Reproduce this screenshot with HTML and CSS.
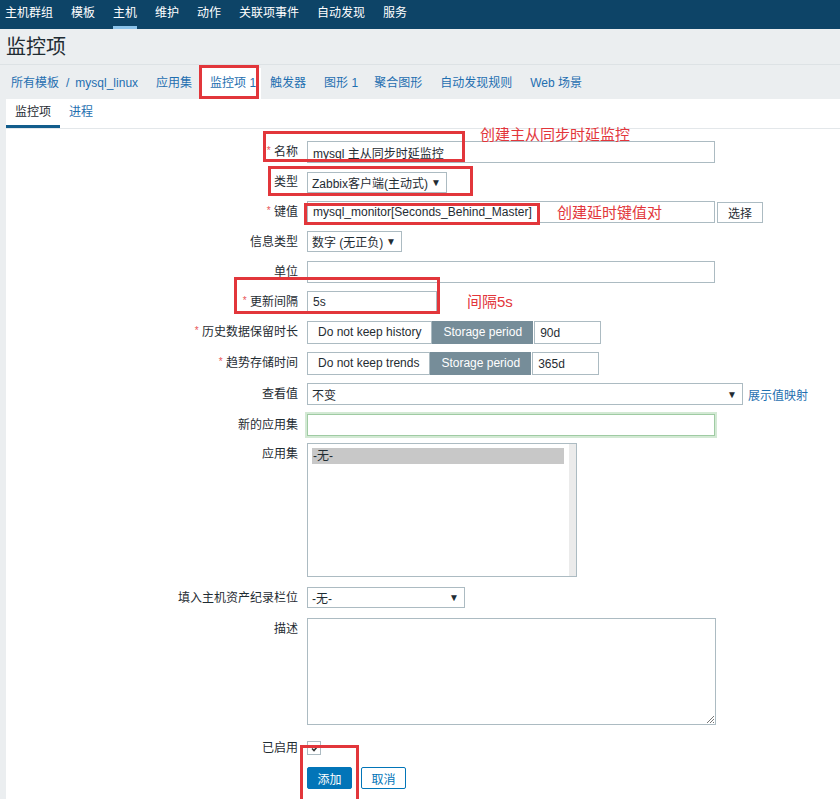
FILE: index.html
```html
<!DOCTYPE html>
<html lang="zh-CN">
<head>
<meta charset="utf-8">
<title>监控项</title>
<link rel="stylesheet" href="styles.css">
</head>
<body>
<nav class="topnav">
  <a>主机群组</a><a>模板</a><a class="active">主机</a><a>维护</a><a>动作</a><a>关联项事件</a><a>自动发现</a><a>服务</a>
</nav>
<header class="page-title"><h1>监控项</h1></header>
<div class="breadcrumbs">
  <a class="crumb">所有模板</a><span class="sep">/</span><a class="crumb-host">mysql_linux</a>
  <a>应用集</a><a class="active">监控项 1</a><a>触发器</a><a class="narrow">图形 1</a><a>聚合图形</a><a>自动发现规则</a><a>Web 场景</a>
</div>
<main class="content">
  <div class="tabs"><a class="active">监控项</a><a>进程</a></div>
  <div class="form">
    <div class="row"><label><span class="req">*</span> 名称</label><div class="ctl"><input class="input w-wide" value="mysql 主从同步时延监控"></div></div>
    <div class="row"><label>类型</label><div class="ctl"><div class="select w-type"><span>Zabbix客户端(主动式)</span><span class="arrow">▼</span></div></div></div>
    <div class="row"><label><span class="req">*</span> 键值</label><div class="ctl"><input class="input w-wide" value="mysql_monitor[Seconds_Behind_Master]"><button class="btn-grey">选择</button></div></div>
    <div class="row"><label>信息类型</label><div class="ctl"><div class="select w-info"><span>数字 (无正负)</span><span class="arrow">▼</span></div></div></div>
    <div class="row"><label>单位</label><div class="ctl"><input class="input w-wide" value=""></div></div>
    <div class="row"><label><span class="req">*</span> 更新间隔</label><div class="ctl"><input class="input w-short" value="5s"></div></div>
    <div class="row row-seg"><label><span class="req">*</span> 历史数据保留时长</label><div class="ctl"><div class="seg"><span>Do not keep history</span><span class="on">Storage period</span></div><input class="input w-days" value="90d"></div></div>
    <div class="row row-seg"><label><span class="req">*</span> 趋势存储时间</label><div class="ctl"><div class="seg"><span>Do not keep trends</span><span class="on">Storage period</span></div><input class="input w-days" value="365d"></div></div>
    <div class="row"><label>查看值</label><div class="ctl"><div class="select w-view"><span>不变</span><span class="arrow">▼</span></div><a class="link">展示值映射</a></div></div>
    <div class="row row-green"><label>新的应用集</label><div class="ctl"><input class="input w-wide focus" value=""></div></div>
    <div class="row row-list"><label>应用集</label><div class="ctl"><div class="listbox"><div class="options"><div class="opt sel">-无-</div></div><div class="scroll"></div></div></div></div>
    <div class="row row-inv"><label>填入主机资产纪录栏位</label><div class="ctl"><div class="select w-inv"><span>-无-</span><span class="arrow">▼</span></div></div></div>
    <div class="row row-desc"><label>描述</label><div class="ctl"><div class="textarea"><svg class="grip" width="10" height="10" viewBox="0 0 10 10"><path d="M9 2L2 9M9 5L5 9M9 8L8 9" stroke="#777" stroke-width="1"/></svg></div></div></div>
    <div class="row row-check"><label>已启用</label><div class="ctl"><span class="checkbox"><svg width="11" height="11" viewBox="0 0 11 11"><path d="M3 5.5L5 7.5L8 4" stroke="#333" stroke-width="1.6" fill="none"/></svg></span></div></div>
    <div class="row row-btns"><label></label><div class="ctl"><button class="btn-main">添加</button><button class="btn-alt">取消</button></div></div>
  </div>
</main>

<div class="mark m1"></div>
<div class="mark m2"></div>
<div class="mark m3"></div>
<div class="mark m4"></div>
<div class="mark m5"></div>
<div class="mark m6"></div>
<div class="note n1">创建主从同步时延监控</div>
<div class="note n2">创建延时键值对</div>
<div class="note n3">间隔5s</div>
</body>
</html>
```

FILE: styles.css
```css
* { box-sizing: border-box; }
body {
  margin: 0;
  background: #ebeef0;
  font-family: "Liberation Sans", "Noto Sans CJK SC", sans-serif;
  font-size: 12px;
  color: #1f2c33;
  position: relative;
  min-height: 799px;
  overflow: hidden;
}
a { text-decoration: none; }

.topnav {
  background: #0d4467;
  height: 29px;
  display: flex;
  gap: 18px;
  padding-left: 5px;
}
.topnav a {
  color: #fff;
  line-height: 26px;
  border-bottom: 3px solid transparent;
}
.topnav a.active { border-bottom-color: #8bc3ea; }

.page-title { height: 35px; padding-left: 6px; }
.page-title h1 {
  margin: 0;
  font-size: 20px;
  font-weight: normal;
  line-height: 36px;
  color: #1f2c33;
}

.breadcrumbs {
  border-top: 1px solid #dde2e5;
  height: 35px;
  display: flex;
  align-items: flex-end;
  padding-left: 2px;
}
.breadcrumbs a {
  color: #1f6fb0;
  line-height: 31px;
  padding: 0 9px;
}
.breadcrumbs a.crumb { padding-right: 0; }
.breadcrumbs .sep { color: #1f6fb0; line-height: 31px; margin: 0 6px 0 7px; }
.breadcrumbs a.crumb-host { padding-left: 0; }
.breadcrumbs a.active { background: #fff; color: #1f6fb0; padding-right: 5px; }
.breadcrumbs a.narrow { padding-right: 7px; }

.content {
  background: #fff;
  margin-left: 6px;
  min-height: 700px;
}
.tabs {
  display: flex;
  height: 30px;
  border-bottom: 1px solid #e3e7ea;
}
.tabs a {
  color: #1f6fb0;
  padding: 0 9px;
  line-height: 26px;
  border-bottom: 3px solid transparent;
}
.tabs a.active { color: #1f2c33; border-bottom-color: #125d8c; }

.form {
  padding-top: 12px;
  display: flex;
  flex-direction: column;
  gap: 8px;
}
.row {
  display: grid;
  grid-template-columns: 292px 1fr;
  column-gap: 9px;
  align-items: start;
}
.row > label {
  text-align: right;
  line-height: 22px;
  height: 22px;
  color: #1f2c33;
}
.req { color: #e8555a; font-size: 10px; line-height: 1; vertical-align: 2px; }
.ctl { display: flex; align-items: center; gap: 3px; }

.input {
  height: 22px;
  border: 1px solid #acbbc2;
  padding: 0 5px;
  font: inherit;
  color: #1f2c33;
  background: #fff;
  outline: none;
}
.w-wide { width: 408px; }
.w-short { width: 130px; }
.w-days { width: 67px; margin-left: -1px; }

.btn-grey {
  height: 21px;
  width: 46px;
  border: 1px solid #acbbc2;
  background: #fff;
  font: inherit;
  color: #1f2c33;
  padding: 0;
  margin-left: -1px;
}

.select {
  height: 21px;
  border: 1px solid #acbbc2;
  display: flex;
  align-items: center;
  justify-content: space-between;
  padding: 0 5px 0 4px;
  background: #fff;
}
.arrow { font-size: 10px; color: #1f2c33; }
.w-type { width: 140px; margin-top: 1px; }
.w-info { width: 95px; }
.w-view { width: 436px; height: 22px; }
.w-inv { width: 158px; }
.link { color: #1f6fb0; margin-left: 2px; }

.row-seg .ctl { gap: 2px; }
.seg { display: flex; height: 23px; }
.seg span {
  border: 1px solid #acbbc2;
  padding: 0 10px;
  line-height: 21px;
  background: #fff;
}
.seg span.on {
  background: #768d99;
  border-color: #768d99;
  color: #fff;
}
.row-seg .input { height: 23px; }

.row-green { margin-top: 1px; }
.focus {
  height: 22px;
  border: 1px solid #9fcba3;
  box-shadow: 0 0 0 2px #d3e9d4;
}

.row-list { margin-top: -1px; }
.listbox {
  width: 270px;
  height: 134px;
  border: 1px solid #acbbc2;
  display: flex;
  justify-content: space-between;
  background: #fff;
}
.options { padding: 4px 4px; flex: 1; }
.opt { line-height: 16px; padding-left: 1px; }
.opt.sel { background: #c8c8c8; width: 252px; }
.scroll { width: 7px; background: #ebebeb; }

.row-inv { margin-top: 2px; }
.row-desc { margin-top: 1px; }
.textarea {
  width: 409px;
  height: 107px;
  border: 1px solid #acbbc2;
  display: flex;
  align-items: flex-end;
  justify-content: flex-end;
}
.grip { display: block; }

.row-check { margin-top: 4px; }
.row-check .ctl { height: 22px; }
.checkbox {
  width: 14px;
  height: 14px;
  border: 1px solid #acbbc2;
  display: flex;
  align-items: center;
  justify-content: center;
  background: #fff;
}

.row-btns { margin-top: 0; }
.row-btns .ctl { gap: 9px; }
.btn-main, .btn-alt {
  height: 22px;
  width: 45px;
  font: inherit;
  border-radius: 2px;
  padding: 0;
}
.btn-main { background: #0275b8; border: 1px solid #0275b8; color: #fff; }
.btn-alt { background: #fff; border: 1px solid #0275b8; color: #0275b8; }

.mark {
  position: absolute;
  border: 3px solid #e2363b;
}
.m1 { left: 263px; top: 131px; width: 202px; height: 31px; }
.m2 { left: 268px; top: 166px; width: 205px; height: 30px; }
.m3 { left: 304px; top: 203px; width: 236px; height: 22px; }
.m4 { left: 234px; top: 277px; width: 206px; height: 37px; }
.m5 { left: 199px; top: 65px; width: 60px; height: 34px; }
.m6 { left: 300px; top: 745px; width: 59px; height: 60px; }

.note {
  position: absolute;
  color: #e2363b;
  font-size: 15px;
  line-height: 18px;
  white-space: nowrap;
}
.n1 { left: 480px; top: 126px; }
.n2 { left: 557px; top: 204px; }
.n3 { left: 467px; top: 293px; }
```
